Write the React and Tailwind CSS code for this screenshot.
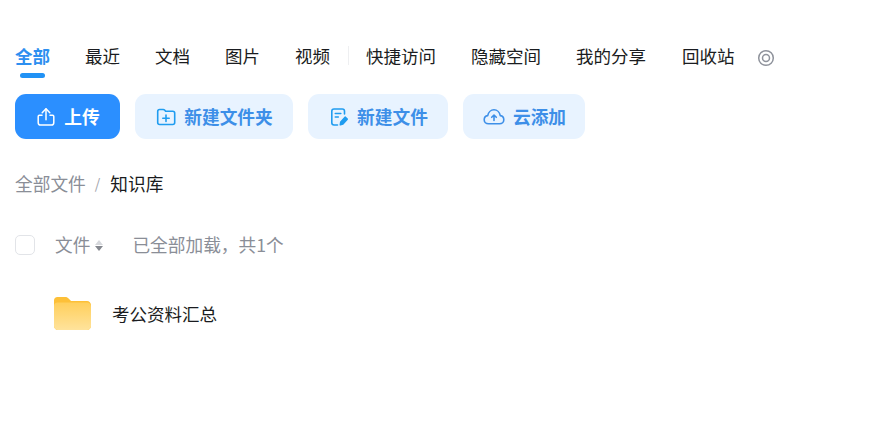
import { useState } from "react";

const font = { fontFamily: '"Noto Sans CJK SC", sans-serif' };

const tabs = ["全部", "最近", "文档", "图片", "视频"];
const moreTabs = ["快捷访问", "隐藏空间", "我的分享"];

function UploadIcon() {
  return (
    <svg width="20" height="20" viewBox="0 0 20 20" fill="none" stroke="currentColor" strokeWidth="1.5" strokeLinecap="round" strokeLinejoin="round">
      <path d="M6.200 5.800 10 1.800l3.800 4" />
      <path d="M10 2v10.800" />
      <path d="M6 8.200H3.400c-.8 0-1.200.5-1.200 1.200v6c0 1.600 1 2.600 2.400 2.600h10.800c1.400 0 2.400-1 2.400-2.600v-6c0-.7-.4-1.200-1.200-1.200H14" />
    </svg>
  );
}

function FolderPlusIcon() {
  return (
    <svg width="20" height="20" viewBox="0 0 20 20" fill="none" stroke="#1f9cf0" strokeWidth="1.6" strokeLinecap="round" strokeLinejoin="round">
      <path d="M1.700 4.500c0-1.200.8-2 2-2h3.500c.7 0 1.200.3 1.600.8l.8 1h7.200c1.100 0 1.900.8 1.900 1.900v9.300c0 1.200-.8 2-2 2H3.700c-1.200 0-2-.8-2-2z" />
      <path d="M10 8v6.500M6.800 11.200h6.400" />
    </svg>
  );
}

function FileEditIcon() {
  return (
    <svg width="20" height="20" viewBox="0 0 20 20" fill="none" stroke="#1f9cf0" strokeWidth="1.6" strokeLinecap="round" strokeLinejoin="round">
      <path d="M15.500 7V4.200c0-1.300-.9-2.200-2.200-2.200H5c-1.300 0-2.200.9-2.200 2.200v11.600C2.800 17.100 3.700 18 5 18h3.500" />
      <path d="M6.300 6.500h5.500M6.300 10h3" />
      <path d="m11.300 17.800.5-2.800 4.300-4.800 2.100 1.900-4.300 4.800z" fill="#1f9cf0" />
    </svg>
  );
}

function CloudUpIcon() {
  return (
    <svg width="22" height="20" viewBox="0 0 22 20" fill="none" stroke="#3d8fe8" strokeWidth="1.6" strokeLinecap="round" strokeLinejoin="round">
      <path d="M5.500 16.800C3 16.800 1.200 15 1.200 12.700c0-2.100 1.500-3.800 3.500-4.100C5.300 5.300 7.900 2.800 11 2.800s5.700 2.500 6.300 5.800c2 .3 3.500 2 3.500 4.100 0 2.300-1.800 4.100-4.300 4.100z" />
      <path d="M11 13.500V8.200M8.700 10.300 11 8l2.300 2.300" />
    </svg>
  );
}

function TargetIcon() {
  return (
    <svg width="18" height="18" viewBox="0 0 18 18" fill="none" stroke="#8f939c" strokeWidth="1.5">
      <circle cx="9" cy="9" r="7.300" />
      <circle cx="9" cy="9" r="3.500" />
    </svg>
  );
}

function SortIcon() {
  return (
    <span className="ml-[5px] mt-[3px] flex flex-col gap-[1px]">
      <svg width="8" height="5" viewBox="0 0 8 5"><path d="M4 0 8 5H0z" fill="#d6d8dc" /></svg>
      <svg width="8" height="5" viewBox="0 0 8 5"><path d="M4 5 8 0H0z" fill="#85888f" /></svg>
    </span>
  );
}

function FolderIcon() {
  return (
    <svg width="37" height="33" viewBox="0 0 38 33" preserveAspectRatio="none">
      <defs>
        <linearGradient id="folderBody" x1="0" y1="0" x2="0" y2="1">
          <stop offset="0" stopColor="#ffcf5c" />
          <stop offset="1" stopColor="#ffe39c" />
        </linearGradient>
      </defs>
      <path d="M0 3.500C0 1.500 1.500 0 3.500 0h8c1.600 0 2.700.6 3.700 1.700L17.500 4H34c2.200 0 4 1.800 4 4v21c0 2.200-1.800 4-4 4H4c-2.200 0-4-1.800-4-4z" fill="#fdc038" />
      <path d="M0 9c0-2 1.500-3.500 3.500-3.500H34c2.200 0 4 1.800 4 4V29c0 2.200-1.800 4-4 4H4c-2.200 0-4-1.800-4-4z" fill="url(#folderBody)" />
    </svg>
  );
}

function ActionButton({ icon, label, className }) {
  return (
    <button className={`flex h-[45px] items-center justify-center gap-2 rounded-[11px] pl-px text-[17.700px] font-bold ${className}`}>
      {icon}
      <span>{label}</span>
    </button>
  );
}

export default function App() {
  const [active] = useState("全部");

  return (
    <div className="h-[425px] w-[876px] overflow-hidden bg-white pl-[15px] pt-[42px]" style={font}>
      <nav className="flex h-[36px] items-start text-[17.500px] leading-[28px] text-[#1a1c20]">
        {tabs.map((tab) => (
          <div key={tab} className={`relative mr-[35px] ${tab === active ? "font-bold text-[#2d8ff0]" : ""}`}>
            {tab}
            {tab === active && <span className="absolute left-[5px] top-[31px] h-[5px] w-[25px] rounded-full bg-[#2192f5]" />}
          </div>
        ))}
        <span className="-ml-[17px] mr-[17px] mt-[4px] h-[19px] w-px bg-[#eeeff1]" />
        {moreTabs.map((tab) => (
          <div key={tab} className="mr-[35px]">{tab}</div>
        ))}
        <div className="ml-px">回收站</div>
        <span className="ml-[22px] mt-[7px] text-[#8f939c]"><TargetIcon /></span>
      </nav>

      <div className="mt-[16px] flex gap-[15px]">
        <ActionButton icon={<UploadIcon />} label="上传" className="w-[105px] bg-[#2b8fff] text-white" />
        <ActionButton icon={<FolderPlusIcon />} label="新建文件夹" className="w-[158px] bg-[#e8f3ff] text-[#3d8fe8]" />
        <ActionButton icon={<FileEditIcon />} label="新建文件" className="w-[140px] bg-[#e8f3ff] text-[#3d8fe8]" />
        <ActionButton icon={<CloudUpIcon />} label="云添加" className="w-[122px] bg-[#e8f3ff] text-[#3d8fe8]" />
      </div>

      <div className="mt-[30px] flex h-[28px] items-center text-[17.700px] text-[#8a8e97]">
        <span>全部文件</span>
        <span className="ml-[9px] mr-[10px] text-[14px] text-[#a0a3aa]">/</span>
        <span className="text-[#1a1c20]">知识库</span>
      </div>

      <div className="mt-[33px] flex h-[28px] items-center text-[17.700px] text-[#8a8e97]">
        <span className="mt-px h-[20px] w-[20px] rounded-[5px] border border-[#e2e4e8]" />
        <span className="ml-[20px]">文件</span>
        <SortIcon />
        <span className="ml-[29px]">已全部加载，共1个</span>
      </div>

      <div className="ml-[39px] mt-[39px] flex items-center">
        <FolderIcon />
        <span className="ml-[21px] mt-[2px] text-[17.500px] text-[#1a1c20]">考公资料汇总</span>
      </div>
    </div>
  );
}
